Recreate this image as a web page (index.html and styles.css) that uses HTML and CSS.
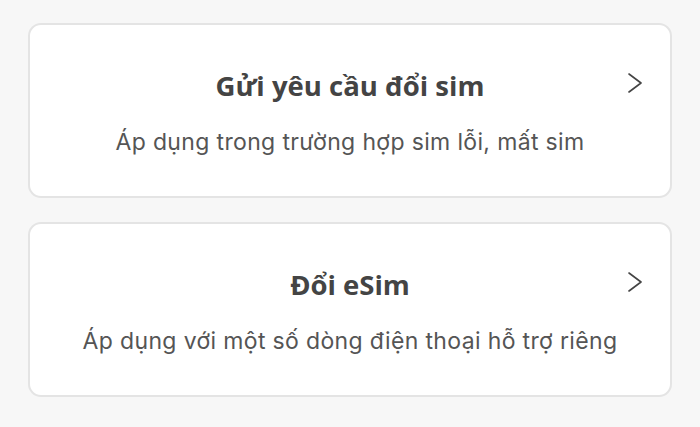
FILE: index.html
```html
<!DOCTYPE html>
<html lang="vi">
<head>
  <meta charset="UTF-8">
  <meta name="viewport" content="width=device-width, initial-scale=1.0">
  <title>Đổi sim</title>
  <link rel="stylesheet" href="styles.css">
</head>
<body>
  <div class="options">
    <a class="option" href="#">
      <h2 class="option-title">Gửi yêu cầu đổi sim</h2>
      <svg class="chevron" viewBox="0 0 14 20" width="14" height="20" aria-hidden="true">
        <path d="M1 1 L13 10 L1 19" fill="none" stroke="#444" stroke-width="1.6" stroke-linecap="round" stroke-linejoin="round"/>
      </svg>
      <p class="option-desc">Áp dụng trong trường hợp sim lỗi, mất sim</p>
    </a>
    <a class="option" href="#">
      <h2 class="option-title">Đổi eSim</h2>
      <svg class="chevron" viewBox="0 0 14 20" width="14" height="20" aria-hidden="true">
        <path d="M1 1 L13 10 L1 19" fill="none" stroke="#444" stroke-width="1.6" stroke-linecap="round" stroke-linejoin="round"/>
      </svg>
      <p class="option-desc">Áp dụng với một số dòng điện thoại hỗ trợ riêng</p>
    </a>
  </div>
</body>
</html>
```

FILE: styles.css
```css
* {
  margin: 0;
  padding: 0;
  box-sizing: border-box;
}

body {
  background: #f7f7f7;
  font-family: "Inter", "Noto Sans", sans-serif;
  padding: 23px 28px;
}

.options {
  display: flex;
  flex-direction: column;
  gap: 24px;
}

/* each card: text centered on the whole card, chevron in the right column */
.option {
  display: grid;
  grid-template-columns: 16px 1fr 16px;
  grid-template-rows: auto auto;
  align-content: center;
  row-gap: 23px;
  height: 175px;
  padding: 4px 28px 0;
  background: #fff;
  border: 2px solid #e4e4e4;
  border-radius: 13px;
  text-decoration: none;
}

.option-title {
  grid-column: 2;
  grid-row: 1;
  text-align: center;
  font-family: "Open Sans", sans-serif;
  font-size: 27.5px;
  font-weight: 700;
  line-height: 36px;
  color: #444;
}

.chevron {
  grid-column: 3;
  grid-row: 1;
  justify-self: end;
  align-self: center;
  margin-top: -6px;
}

.option-desc {
  grid-column: 2;
  grid-row: 2;
  text-align: center;
  font-size: 23px;
  letter-spacing: 0.35px;
  line-height: 30px;
  color: #555;
}
```
